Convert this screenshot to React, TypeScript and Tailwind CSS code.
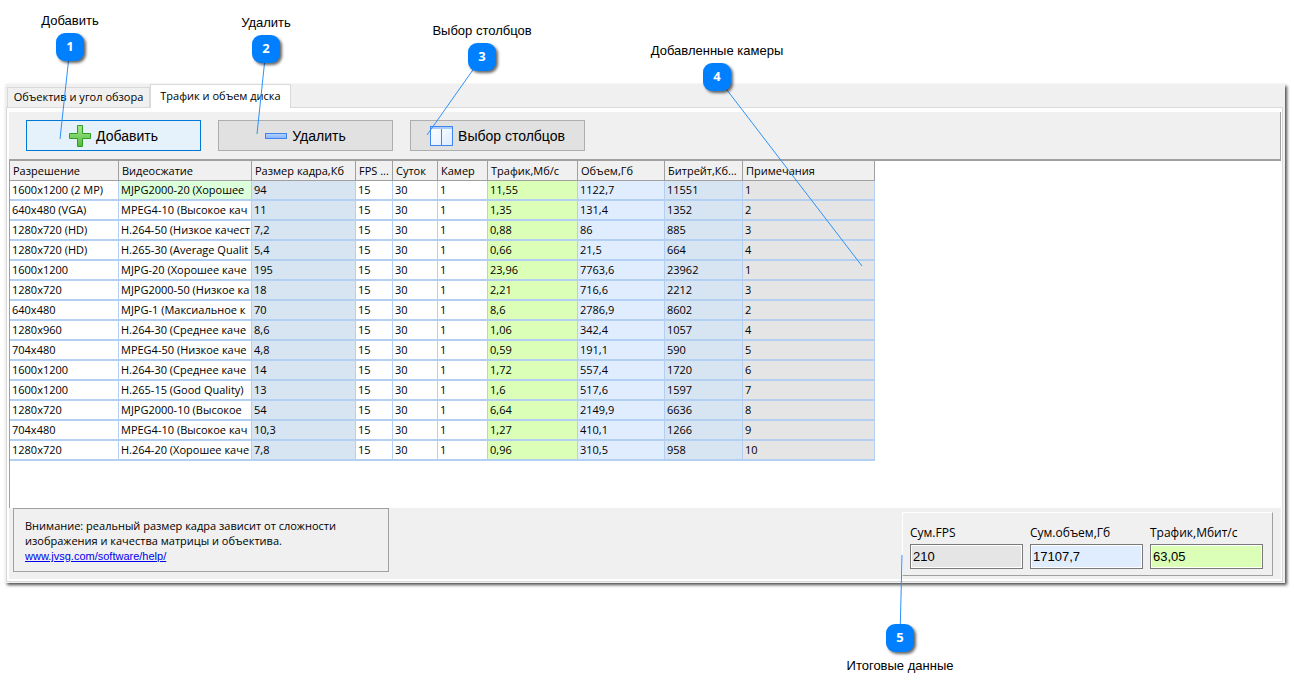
import React from 'react';

type Camera = string[];

const COLUMNS = [
  { title: 'Разрешение', width: 'w-[109px]', cell: 'bg-white' },
  { title: 'Видеосжатие', width: 'w-[133px]', cell: 'bg-white' },
  { title: 'Размер кадра,Кб', width: 'w-[104px]', cell: 'bg-[#d7e4f1]' },
  { title: 'FPS ...', width: 'w-[37px]', cell: 'bg-white' },
  { title: 'Суток', width: 'w-[45px]', cell: 'bg-white' },
  { title: 'Камер', width: 'w-[50px]', cell: 'bg-white' },
  { title: 'Трафик,Мб/с', width: 'w-[90px]', cell: 'bg-[#dbffb7]' },
  { title: 'Объем,Гб', width: 'w-[87px]', cell: 'bg-[#e0edff]' },
  { title: 'Битрейт,Кб...', width: 'w-[78px]', cell: 'bg-[#d7e4f1]' },
  { title: 'Примечания', width: 'w-[132px]', cell: 'bg-[#e5e5e5]' },
];

const CAMERAS: Camera[] = [
  ['1600x1200 (2 MP)', 'MJPG2000-20 (Хорошее', '94', '15', '30', '1', '11,55', '1122,7', '11551', '1'],
  ['640x480 (VGA)', 'MPEG4-10 (Высокое кач', '11', '15', '30', '1', '1,35', '131,4', '1352', '2'],
  ['1280x720 (HD)', 'H.264-50 (Низкое качест', '7,2', '15', '30', '1', '0,88', '86', '885', '3'],
  ['1280x720 (HD)', 'H.265-30 (Average Qualit', '5,4', '15', '30', '1', '0,66', '21,5', '664', '4'],
  ['1600x1200', 'MJPG-20 (Хорошее каче', '195', '15', '30', '1', '23,96', '7763,6', '23962', '1'],
  ['1280x720', 'MJPG2000-50 (Низкое ка', '18', '15', '30', '1', '2,21', '716,6', '2212', '3'],
  ['640x480', 'MJPG-1 (Максиальное к', '70', '15', '30', '1', '8,6', '2786,9', '8602', '2'],
  ['1280x960', 'H.264-30 (Среднее каче', '8,6', '15', '30', '1', '1,06', '342,4', '1057', '4'],
  ['704x480', 'MPEG4-50 (Низкое каче', '4,8', '15', '30', '1', '0,59', '191,1', '590', '5'],
  ['1600x1200', 'H.264-30 (Среднее каче', '14', '15', '30', '1', '1,72', '557,4', '1720', '6'],
  ['1600x1200', 'H.265-15 (Good Quality)', '13', '15', '30', '1', '1,6', '517,6', '1597', '7'],
  ['1280x720', 'MJPG2000-10 (Высокое', '54', '15', '30', '1', '6,64', '2149,9', '6636', '8'],
  ['704x480', 'MPEG4-10 (Высокое кач', '10,3', '15', '30', '1', '1,27', '410,1', '1266', '9'],
  ['1280x720', 'H.264-20 (Хорошее каче', '7,8', '15', '30', '1', '0,96', '310,5', '958', '10'],
];

const PlusIcon = () => (
  <svg className="w-[22px] h-[22px]" viewBox="0 0 22 22" aria-hidden="true">
    <defs>
      <linearGradient id="plus" x1="0" y1="0" x2="0" y2="1">
        <stop offset="0" stopColor="#a5e88f" />
        <stop offset="1" stopColor="#55bb3c" />
      </linearGradient>
    </defs>
    <path d="M8.500 .5h5v8h8v5h-8v8h-5v-8h-8v-5h8z" fill="url(#plus)" stroke="#2f9e22" />
  </svg>
);

const MinusIcon = () => (
  <svg className="w-[22px] h-[22px]" viewBox="0 0 22 22" aria-hidden="true">
    <defs>
      <linearGradient id="minus" x1="0" y1="0" x2="0" y2="1">
        <stop offset="0" stopColor="#b8d4ff" />
        <stop offset="1" stopColor="#85b2fb" />
      </linearGradient>
    </defs>
    <rect x=".5" y="8.500" width="21" height="5" fill="url(#minus)" stroke="#3f87f0" />
  </svg>
);

const ColumnsIcon = () => (
  <svg className="w-[23px] h-[22px]" viewBox="0 0 23 22" aria-hidden="true">
    <defs>
      <linearGradient id="pane" x1="0" y1="0" x2="1" y2="1">
        <stop offset="0" stopColor="#ffffff" />
        <stop offset="1" stopColor="#dcecff" />
      </linearGradient>
    </defs>
    <rect x=".5" y="1.500" width="22" height="19" fill="url(#pane)" stroke="#3f87f0" />
    <path d="M1 2h21v2h-21z" fill="#a9cbfa" />
    <path d="M11.500 4v16" stroke="#3f87f0" />
  </svg>
);

const ToolButton: React.FC<{ label: string; icon: React.ReactNode; active?: boolean }> = ({ label, icon, active }) => {
  const styles = active ? 'border-[#0078d7] bg-[#e5f1fb]' : 'border-[#adadad] bg-[#e1e1e1]';
  return (
    <button type="button" className={`flex h-[31px] w-[175px] items-center justify-center gap-[5px] border font-['Liberation_Sans',sans-serif] text-sm ${styles}`}>
      {icon}
      <span>{label}</span>
    </button>
  );
};

const TotalField: React.FC<{ id: string; label: string; value: string; fill: string }> = ({ id, label, value, fill }) => (
  <div className="flex w-[113px] flex-col gap-[3px]">
    <label htmlFor={id} className="text-[12px] leading-4">{label}</label>
    <div className="border border-[#7a7a7a] bg-white p-px">
      <input id={id} readOnly defaultValue={value} className={`block h-[21px] w-full px-px font-['Liberation_Sans',sans-serif] text-[13px] outline-none ${fill}`} />
    </div>
  </div>
);

// dx/dy: where the pointer ends, measured from the centre of the badge
const Callout: React.FC<{ n: number; label: string; place: string; dx: number; dy: number; below?: boolean }> = ({ n, label, place, dx, dy, below }) => (
  <div className={`absolute flex w-7 items-center ${below ? 'flex-col-reverse gap-[6px]' : 'flex-col gap-1'} ${place}`}>
    <span className="whitespace-nowrap font-['Liberation_Sans',sans-serif] text-[13px] leading-4">{label}</span>
    <div className="relative h-7 w-7">
      <svg className="absolute left-1/2 top-1/2 h-px w-px overflow-visible" aria-hidden="true">
        <line x1="0" y1="0" x2={dx} y2={dy} stroke="#2a92fb" />
      </svg>
      <span className="relative flex h-7 w-7 items-center justify-center rounded-[9px] bg-[#0080ff] text-[13px] font-bold text-white shadow-[2px_2px_3px_rgba(0,0,0,0.6)]">
        {n}
      </span>
    </div>
  </div>
);

const CameraTable = () => (
  <table className="w-[865px] table-fixed border-separate border-spacing-0 text-left">
    <thead>
      <tr>
        {COLUMNS.map(col => (
          <th key={col.title} className={`h-5 overflow-hidden whitespace-nowrap border-b border-r border-[#a0a0a0] bg-[#f0f0f0] p-0 pl-[3px] font-normal leading-4 ${col.width}`}>
            {col.title}
          </th>
        ))}
      </tr>
    </thead>
    <tbody>
      {CAMERAS.map((cam, row) => (
        <tr key={row}>
          {cam.map((value, i) => (
            <td key={i} className={`h-5 overflow-hidden whitespace-nowrap border-b-2 border-r border-[#b3d0f2] p-0 pl-[2px] leading-4 ${row === 0 && i === 1 ? 'bg-[#dcffdc]' : COLUMNS[i].cell}`}>
              {value}
            </td>
          ))}
        </tr>
      ))}
    </tbody>
  </table>
);

export default function App() {
  return (
    <div className="relative min-h-screen bg-white pt-[84px] pb-[106px] font-['Open_Sans','Noto_Sans',sans-serif] text-[11px] text-black">
      <main className="ml-[5px] mr-[9px] bg-[#f0f0f0] pl-px pr-[2px] pb-px shadow-[2px_2px_3px_rgba(0,0,0,0.7)]">
        <div role="tablist" className="flex items-end pl-px">
          <button type="button" role="tab" aria-selected="false" className="h-5 w-[143px] whitespace-nowrap border border-b-0 border-[#d9d9d9]">
            Объектив и угол обзора
          </button>
          <button type="button" role="tab" aria-selected="true" className="relative -mb-px h-6 w-[141px] whitespace-nowrap border border-b-0 border-[#d9d9d9] bg-white">
            Трафик и объем диска
          </button>
        </div>

        <div className="border border-[#d9d9d9] bg-white pb-[2px] pl-[2px] pr-px pt-1">
          <div className="flex gap-[17px] border-b-2 border-r border-[#a0a0a0] bg-[#f0f0f0] pb-2 pl-[17px] pt-2">
            <ToolButton label="Добавить" icon={<PlusIcon />} active />
            <ToolButton label="Удалить" icon={<MinusIcon />} />
            <ToolButton label="Выбор столбцов" icon={<ColumnsIcon />} />
          </div>

          <div className="min-h-[347px] border-l border-[#a0a0a0]">
            <CameraTable />
          </div>

          <div className="flex items-start justify-between bg-[#f0f0f0] pb-[3px] pl-1 pr-2">
            <div className="w-[376px] border border-[#a0a0a0] pb-[7px] pl-[11px] pt-[9px] leading-[15px]">
              <p>
                Внимание: реальный размер кадра зависит от сложности<br />
                изображения и качества матрицы и объектива.
              </p>
              <a href="http://www.jvsg.com/software/help/" className="font-['Liberation_Sans',sans-serif] leading-4 text-[#0000ee] underline">
                www.jvsg.com/software/help/
              </a>
            </div>
            <div className="mt-1 flex gap-[7px] border border-b-[#a0a0a0] border-l-white border-r-[#a0a0a0] border-t-white pb-[6px] pl-[7px] pr-[9px] pt-3">
              <TotalField id="fps" label="Сум.FPS" value="210" fill="bg-[#e5e5e5]" />
              <TotalField id="volume" label="Сум.объем,Гб" value="17107,7" fill="bg-[#e0edff]" />
              <TotalField id="traffic" label="Трафик,Мбит/с" value="63,05" fill="bg-[#dbffb7]" />
            </div>
          </div>
        </div>
      </main>

      <Callout n={1} label="Добавить" place="left-[56px] top-[13px]" dx={-10} dy={92} />
      <Callout n={2} label="Удалить" place="left-[252px] top-[15px]" dx={-9} dy={85} />
      <Callout n={3} label="Выбор столбцов" place="left-[468px] top-[23px]" dx={-55} dy={78} />
      <Callout n={4} label="Добавленные камеры" place="left-[703px] top-[43px]" dx={145} dy={189} />
      <Callout n={5} label="Итоговые данные" place="right-[380px] top-[624px]" dx={2} dy={-83} below />
    </div>
  );
}
